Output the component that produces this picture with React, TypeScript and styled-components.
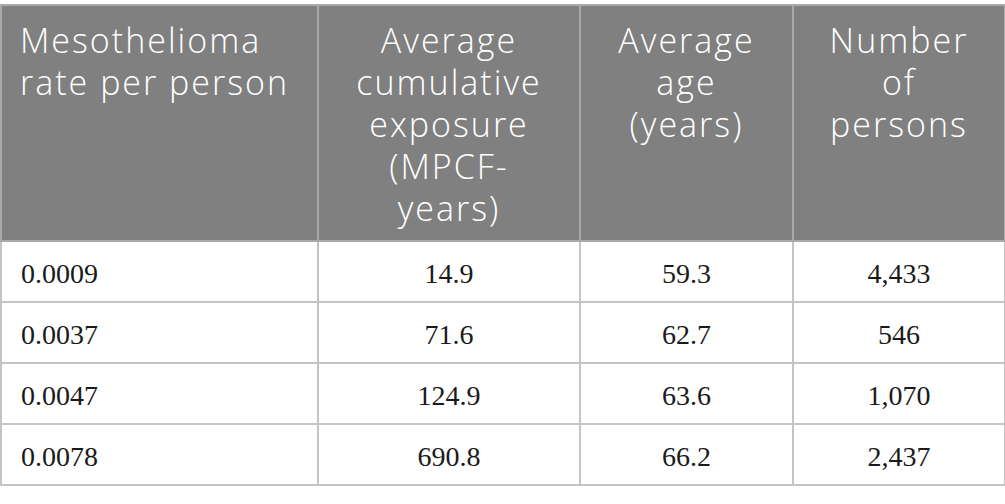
import styled, { createGlobalStyle } from "styled-components";

const GlobalStyle = createGlobalStyle`
  html, body {
    margin: 0;
    padding: 0;
    background: #ffffff;
  }
`;

const rows = [
  { rate: "0.0009", exposure: "14.9", age: "59.3", persons: "4,433" },
  { rate: "0.0037", exposure: "71.6", age: "62.7", persons: "546" },
  { rate: "0.0047", exposure: "124.9", age: "63.6", persons: "1,070" },
  { rate: "0.0078", exposure: "690.8", age: "66.2", persons: "2,437" },
];

const App = () => {
  return (
    <>
      <GlobalStyle />
      <Table>
        <colgroup>
          <col style={{ width: 317 }} />
          <col style={{ width: 262 }} />
          <col style={{ width: 213 }} />
          <col style={{ width: 212 }} />
        </colgroup>
        <thead>
          <HeadRow>
            <HeadCell $align="left">
              Mesothelioma
              <br />
              rate per person
            </HeadCell>
            <HeadCell $align="center">
              Average
              <br />
              cumulative
              <br />
              exposure
              <br />
              (MPCF-
              <br />
              years)
            </HeadCell>
            <HeadCell $align="center">
              Average
              <br />
              age
              <br />
              (years)
            </HeadCell>
            <HeadCell $align="center">
              Number
              <br />
              of
              <br />
              persons
            </HeadCell>
          </HeadRow>
        </thead>
        <tbody>
          {rows.map((row) => (
            <BodyRow key={row.rate}>
              <Cell $align="left">{row.rate}</Cell>
              <Cell $align="center">{row.exposure}</Cell>
              <Cell $align="center">{row.age}</Cell>
              <Cell $align="center">{row.persons}</Cell>
            </BodyRow>
          ))}
        </tbody>
      </Table>
    </>
  );
};

export default App;

const Table = styled.table`
  margin-top: 4px;
  width: 1005px;
  border-collapse: collapse;
  table-layout: fixed;
  border: 2px solid #c4c4c4;
`;

const HeadRow = styled.tr`
  height: 236px;
  background-color: #7f807f;
`;

const HeadCell = styled.th<{ $align: "left" | "center" }>`
  vertical-align: top;
  text-align: ${(props) => props.$align};
  padding-top: 13px;
  padding-left: ${(props) => (props.$align === "left" ? "18px" : "4px")};
  padding-right: ${(props) => (props.$align === "left" ? "8px" : "4px")};
  border: 2px solid #a9a9a9;
  color: #ffffff;
  font-family: "Open Sans", "Noto Sans", sans-serif;
  font-size: 34px;
  font-weight: 300;
  letter-spacing: 2px;
  line-height: 42px;
`;

const BodyRow = styled.tr`
  height: 61px;
`;

const Cell = styled.td<{ $align: "left" | "center" }>`
  text-align: ${(props) => props.$align};
  vertical-align: middle;
  padding: 4px 8px 0 ${(props) => (props.$align === "left" ? "19px" : "8px")};
  border: 2px solid #c4c4c4;
  color: #1a1a1a;
  font-family: "Liberation Serif", "Times New Roman", serif;
  font-size: 28px;
  line-height: 30px;
`;
